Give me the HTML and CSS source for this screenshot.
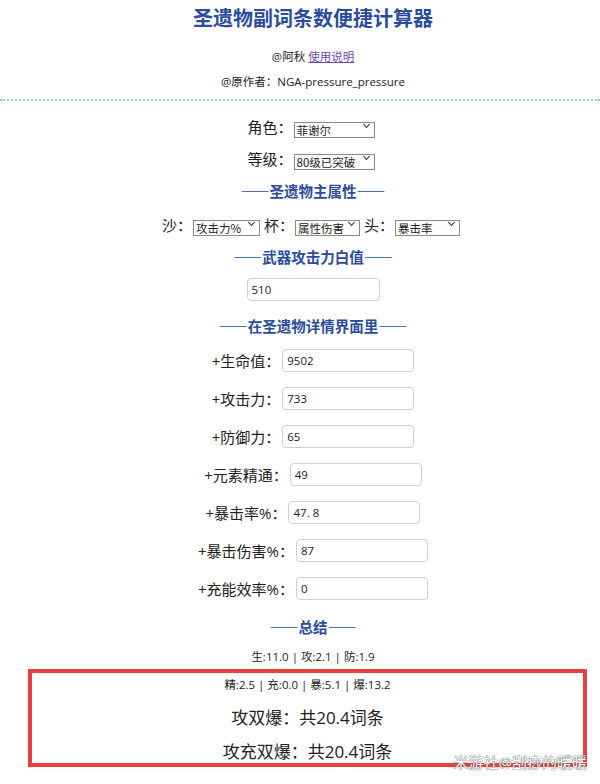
FILE: index.html
```html
<!DOCTYPE html>
<html lang="zh-CN">
<head>
    <meta charset="UTF-8">
    <meta name="viewport" content="width=device-width, initial-scale=1.0">
    <title>圣遗物副词条数便捷计算器</title>
    <link rel="stylesheet" href="styles.css">
</head>
<body>
    <div class="header">
        <h1 class="title">圣遗物副词条数便捷计算器</h1>
        <p class="author">@阿秋 <a href="#" class="help">使用说明</a></p>
        <p class="origin">@原作者：NGA-pressure_pressure</p>
    </div>

    <div class="main">
        <div class="row row-top">
            <label for="role" class="label">角色：</label>
            <span class="sel sel-wide">
                <select id="role" class="select">
                    <option>菲谢尔</option>
                </select>
            </span>
        </div>
        <div class="row">
            <label for="level" class="label">等级：</label>
            <span class="sel sel-wide">
                <select id="level" class="select">
                    <option>80级已突破</option>
                </select>
            </span>
        </div>

        <div class="row heading">——圣遗物主属性——</div>
        <div class="row row-main">
            <label for="sand" class="label">沙：</label>
            <span class="sel sel-sand">
                <select id="sand" class="select">
                    <option>攻击力%</option>
                </select>
            </span>
            <label for="cup" class="label">杯：</label>
            <span class="sel sel-small">
                <select id="cup" class="select">
                    <option>属性伤害</option>
                </select>
            </span>
            <label for="head" class="label">头：</label>
            <span class="sel sel-small">
                <select id="head" class="select">
                    <option>暴击率</option>
                </select>
            </span>
        </div>

        <div class="row heading heading-short">——武器攻击力白值——</div>
        <div class="row row-weapon">
            <input type="text" class="input input-weapon" value="510">
        </div>

        <div class="row heading">——在圣遗物详情界面里——</div>
        <div class="row stat">
            <label class="label">+生命值：</label>
            <input type="text" class="input" value="9502">
        </div>
        <div class="row stat">
            <label class="label">+攻击力：</label>
            <input type="text" class="input" value="733">
        </div>
        <div class="row stat">
            <label class="label">+防御力：</label>
            <input type="text" class="input" value="65">
        </div>
        <div class="row stat">
            <label class="label">+元素精通：</label>
            <input type="text" class="input" value="49">
        </div>
        <div class="row stat">
            <label class="label">+暴击率%：</label>
            <input type="text" class="input" value="47. 8">
        </div>
        <div class="row stat">
            <label class="label">+暴击伤害%：</label>
            <input type="text" class="input" value="87">
        </div>
        <div class="row stat">
            <label class="label">+充能效率%：</label>
            <input type="text" class="input" value="0">
        </div>

        <div class="row heading heading-sum">——总结——</div>
        <div class="row summary">生:11.0 | 攻:2.1 | 防:1.9</div>

        <div class="result">
            <div class="row summary summary-first">精:2.5 | 充:0.0 | 暴:5.1 | 爆:13.2</div>
            <div class="row total total-a">攻双爆：共20.4词条</div>
            <div class="row total total-b">攻充双爆：共20.4词条</div>
        </div>
    </div>

    <div class="watermark">米游社@刮痧的暖暖</div>
</body>
</html>
```

FILE: styles.css
```css
:root {
  --blue: #2b4b9b;
  --text: #222222;
  --red: #e8403f;
  --line: #9cc6de;
  --sm: 11.5px;
  --md: 15px;
}
body {
  margin: 0;
  font-family: 'Open Sans', 'Noto Sans CJK SC', sans-serif;
  color: var(--text);
  background-color: #ffffff;
  position: relative;
  height: 784px;
  overflow: hidden;
}
.header {
  padding-left: 26px;
  padding-bottom: 9px;
  border-bottom: 2px dotted var(--line);
  text-align: center;
}
.title {
  margin: 6px 0 0;
  font-size: 20px;
  line-height: 24px;
  font-weight: bold;
  color: var(--blue);
  font-family: 'Noto Sans CJK SC', sans-serif;
}
.author, .origin {
  margin: 0;
  font-size: var(--sm);
  line-height: 16px;
}
.author {
  margin-top: 19px;
}
.origin {
  margin-top: 9px;
}
.help {
  color: #6b4ba3;
}
.main {
  padding-left: 26px;
  padding-top: 9px;
}
.row {
  display: flex;
  justify-content: center;
  align-items: center;
  height: 32px;
}
.row-top {
  height: 32px;
}
.label {
  font-size: var(--md);
  white-space: nowrap;
}

/* select con flecha propia */
.sel {
  position: relative;
  display: block;
  height: 16px;
  margin: 0 4px 0 1px;
}
.sel::after {
  content: "";
  position: absolute;
  right: 6px;
  top: 4px;
  width: 4px;
  height: 4px;
  border-right: 1.5px solid #333;
  border-bottom: 1.5px solid #333;
  transform: rotate(45deg);
  pointer-events: none;
}
.select {
  appearance: none;
  -webkit-appearance: none;
  box-sizing: border-box;
  width: 100%;
  height: 16px;
  padding: 0 14px 0 2px;
  margin: 0;
  border: 1px solid #8a8a8a;
  border-radius: 0;
  background-color: #ffffff;
  font-family: 'Noto Sans CJK SC', sans-serif;
  font-size: 11.5px;
  line-height: 14px;
  color: var(--text);
}
.sel-wide {
  width: 81px;
}
.sel-sand {
  width: 67px;
}
.sel-small {
  width: 65px;
}
.heading {
  font-family: 'Noto Sans CJK SC', sans-serif;
  font-size: 14.5px;
  font-weight: bold;
  color: var(--blue);
}
.row-main {
  height: 36px;
}
.heading-short {
  height: 28px;
}
.row-weapon {
  height: 39px;
}
.input {
  box-sizing: border-box;
  width: 132px;
  height: 23px;
  padding: 0 4px;
  border: 1px solid #cfcfcf;
  border-radius: 4px;
  font-family: 'Open Sans', 'Noto Sans CJK SC', sans-serif;
  font-size: var(--sm);
  color: var(--text);
}
.input-weapon {
  width: 133px;
}
.stat {
  height: 38px;
}
.stat .input {
  margin-left: 2px;
}
.heading-sum {
  height: 38px;
}
.summary {
  font-size: var(--sm);
  height: 22px;
}
/* recuadro rojo de la captura */
.result {
  margin: 2px 13px 0 2px;
  border: 4px solid var(--red);
}
.summary-first {
  height: 22px;
}
.total {
  font-size: 17px;
}
.total-a {
  height: 42px;
}
.total-b {
  height: 26px;
}
.watermark {
  position: absolute;
  right: 13px;
  top: 752px;
  font-size: 15px;
  line-height: 20px;
  color: #ffffff;
  text-shadow: 0 0 1px #444, 0 0 1px #666;
}
```
